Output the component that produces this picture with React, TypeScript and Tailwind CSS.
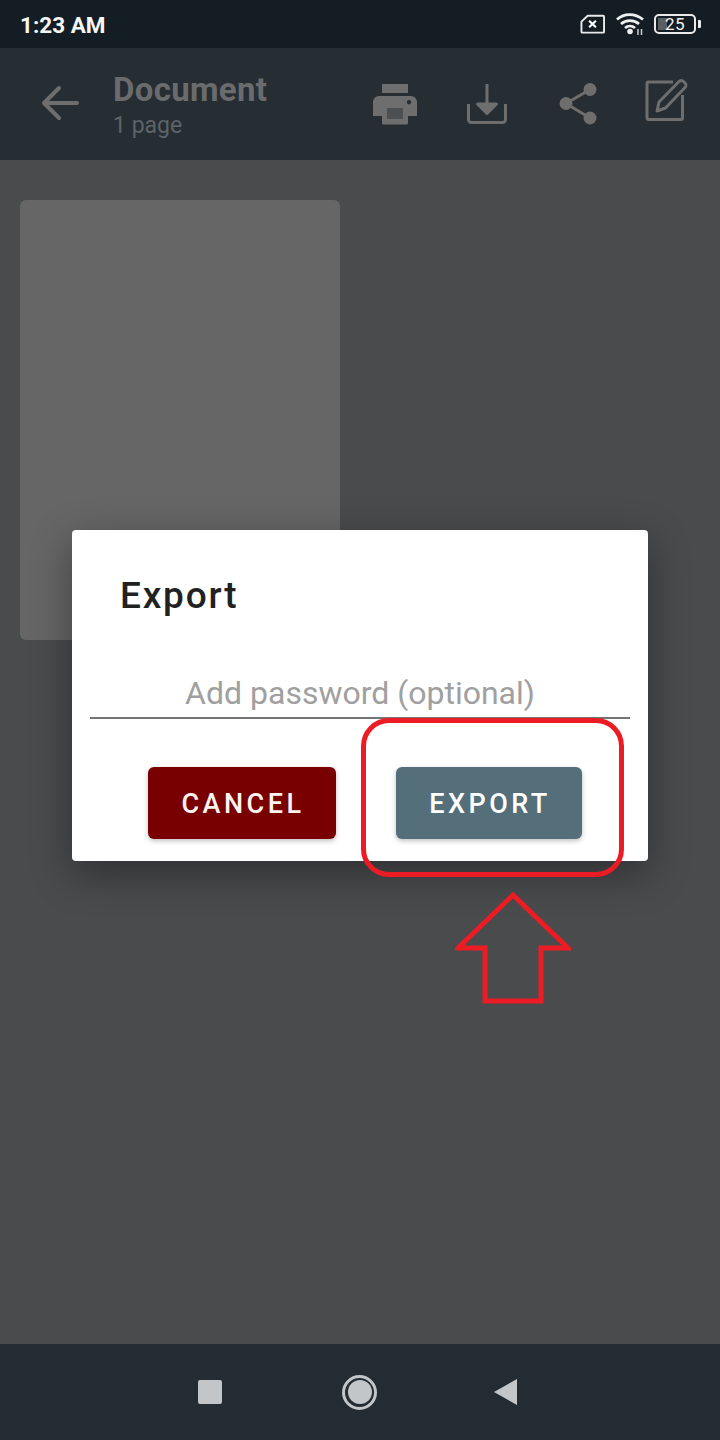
const iconTone = '#6e6e6e';

function StatusIcons() {
  return (
    <div className="flex items-center">
      {/* sim card, no service */}
      <svg width="25" height="20" viewBox="0 0 26 20" fill="none">
        <path d="M8 1.500H24a1 1 0 0 1 1 1V18a1 1 0 0 1-1 1H2.500a1 1 0 0 1-1-1V7.500Z" stroke="#e8eaeb" strokeWidth="2" strokeLinejoin="round" />
        <path d="M9.500 6.500l7 7M16.500 6.500l-7 7" stroke="#fff" strokeWidth="2.200" />
      </svg>
      {/* wifi */}
      <svg className="ml-[10px]" width="30" height="24" viewBox="0 0 30 24" fill="none">
        <path d="M2 7.500C9 1 20 1 28 7.500" stroke="#eef0f0" strokeWidth="2.800" />
        <path d="M6 12C11 7.500 19 7.500 24 12" stroke="#eef0f0" strokeWidth="2.800" />
        <path d="M10 16C13 13.500 17 13.500 20 16" stroke="#eef0f0" strokeWidth="2.800" />
        <circle cx="15" cy="19.500" r="2.800" fill="#eef0f0" />
        <path d="M23 17v6M26.500 17v6" stroke="#c9cccd" strokeWidth="1.500" />
      </svg>
      {/* battery */}
      <div className="ml-[9px] flex items-center gap-[2px]">
        <div className="relative flex h-[20px] w-[42px] items-center justify-center rounded-[5px] border-2 border-[#e8eaeb]">
          <div className="absolute bottom-[2px] left-[2px] top-[2px] w-[9px] bg-[#5a5f61]" />
          <span className="relative text-[17px] leading-none text-[#f2f3f3] tracking-[0.5px]">25</span>
        </div>
        <div className="h-[8px] w-[3px] rounded-r-[1px] bg-[#e8eaeb]" />
      </div>
    </div>
  );
}

function AppBarIcons() {
  return (
    <div className="flex items-center">
      <svg className="ml-[-1px]" width="46" height="42" viewBox="0 0 46 42" fill={iconTone}>
        <path d="M10 1h26v9H10Z" />
        <path fillRule="evenodd" d="M7 13h32a6 6 0 0 1 6 6v14H36v7a1.500 1.500 0 0 1-1.500 1.500h-23A1.500 1.500 0 0 1 10 40v-7H1V19a6 6 0 0 1 6-6Zm30 4a2.200 2.200 0 1 0 .01 0Z" />
        <rect x="15" y="25" width="16" height="11" fill="#4d5052" />
      </svg>
      <svg className="ml-[48px]" width="42" height="42" viewBox="0 0 42 42" fill="none" stroke={iconTone} strokeWidth="3">
        <path d="M2.500 21v15.500a3 3 0 0 0 3 3h31a3 3 0 0 0 3-3V21" />
        <path d="M21 1v24" />
        <path d="M11.500 21H30.500L21 30.500Z" fill={iconTone} strokeLinejoin="round" />
      </svg>
      <svg className="ml-[51px]" width="40" height="44" viewBox="0 0 40 44" fill={iconTone}>
        <circle cx="31" cy="7.500" r="6.500" />
        <circle cx="31" cy="36" r="6.500" />
        <circle cx="7" cy="21.500" r="6.500" />
        <path d="M7 21.500 31 7.500M7 21.500 31 36" stroke={iconTone} strokeWidth="3" />
      </svg>
      <svg className="ml-[46px] mt-[-8px]" width="44" height="44" viewBox="0 0 44 44" fill="none" stroke={iconTone} strokeWidth="3">
        <path d="M28 4H3.500a1.500 1.500 0 0 0-1.500 1.500V40a1.500 1.500 0 0 0 1.500 1.500H36a1.500 1.500 0 0 0 1.500-1.500V17" />
        <path d="M12 33l2-9L34 3.500a3 3 0 0 1 4.500 0l1.500 1.500a3 3 0 0 1 0 4.500L20.500 30Z" strokeLinejoin="round" />
      </svg>
    </div>
  );
}

export default function App() {
  return (
    <div className="relative flex h-[1440px] w-[720px] flex-col overflow-hidden bg-[#4a4b4d] font-['Roboto',sans-serif]">
      {/* Status bar */}
      <div className="flex h-[48px] items-center justify-between bg-[#141d23] pl-[20px] pr-[19px]">
        <span className="mt-[3px] text-[22.500px] font-bold leading-none text-[#f5f6f6]">1:23 AM</span>
        <StatusIcons />
      </div>

      {/* App bar */}
      <div className="flex h-[112px] items-center bg-[#262e34] pr-[31px]">
        <svg className="ml-[41px] mt-[-2px]" width="38" height="36" viewBox="0 0 38 36" fill="none" stroke={iconTone} strokeWidth="4" strokeLinecap="round" strokeLinejoin="round">
          <path d="M36 18H3M18 3 3 18l15 15" />
        </svg>
        <div className="ml-[34px] flex flex-col pt-[6px]">
          <span className="text-[33px] font-bold leading-[38px] tracking-[0.3px] text-[#6a6b6d]">Document</span>
          <span className="text-[23px] leading-[34px] text-[#5e6367]">1 page</span>
        </div>
        <div className="ml-auto">
          <AppBarIcons />
        </div>
      </div>

      {/* Document area */}
      <div className="flex-1 p-[20px] pt-[40px]">
        <div className="h-[440px] w-[320px] rounded-[6px] bg-[#666666]" />
      </div>

      {/* Nav bar */}
      <div className="flex h-[96px] items-center bg-[#232c33] pl-[198px]">
        <div className="h-[24px] w-[24px] rounded-[2px] bg-[#c3c6c9]" />
        <div className="ml-[120px] flex h-[35px] w-[35px] items-center justify-center rounded-full border-[3px] border-[#c3c6c9]">
          <div className="h-[24px] w-[24px] rounded-full bg-[#c3c6c9]" />
        </div>
        <svg className="ml-[116px]" width="24" height="28" viewBox="0 0 24 28">
          <path d="M24 1V27L1 14Z" fill="#c3c6c9" />
        </svg>
      </div>

      {/* Export dialog */}
      <div className="absolute left-[72px] top-[530px] h-[331px] w-[576px] rounded-[4px] bg-white shadow-[0_12px_40px_rgba(0,0,0,0.38)]">
        <h2 className="pl-[48px] pt-[44px] text-[37px] font-medium leading-[44px] tracking-[1.800px] text-[#212121]">Export</h2>
        <div className="mx-[18px] mt-[52px] h-[49px] border-b-2 border-[#757575] text-center text-[32px] leading-[46px] text-[#a0a0a0]">
          Add password (optional)
        </div>
        <div className="mt-[48px] flex pl-[76px]">
          <button className="flex h-[72px] w-[188px] items-center justify-center rounded-[6px] bg-[#790000] pl-[2px] pt-[3px] text-[27px] font-medium tracking-[3.500px] text-[#fdf3f3] shadow-[0_2px_5px_rgba(0,0,0,0.25)]">
            CANCEL
          </button>
          <button className="ml-[60px] flex h-[72px] w-[186px] items-center justify-center rounded-[6px] bg-[#546e7a] pl-[2px] pt-[3px] text-[27px] font-medium tracking-[3.500px] text-white shadow-[0_2px_5px_rgba(0,0,0,0.25)]">
            EXPORT
          </button>
        </div>
      </div>

      {/* Red annotation */}
      <div className="absolute left-[361px] top-[718px] h-[159px] w-[263px] rounded-[28px] border-[5px] border-[#ec1c24]" />
      <svg className="absolute left-[455px] top-[892px]" width="116" height="112" viewBox="0 0 116 112" fill="none">
        <path d="M58 3 3 56H30V109H86V56H113Z" stroke="#ec1c24" strokeWidth="5" strokeLinejoin="miter" />
      </svg>
    </div>
  );
}
